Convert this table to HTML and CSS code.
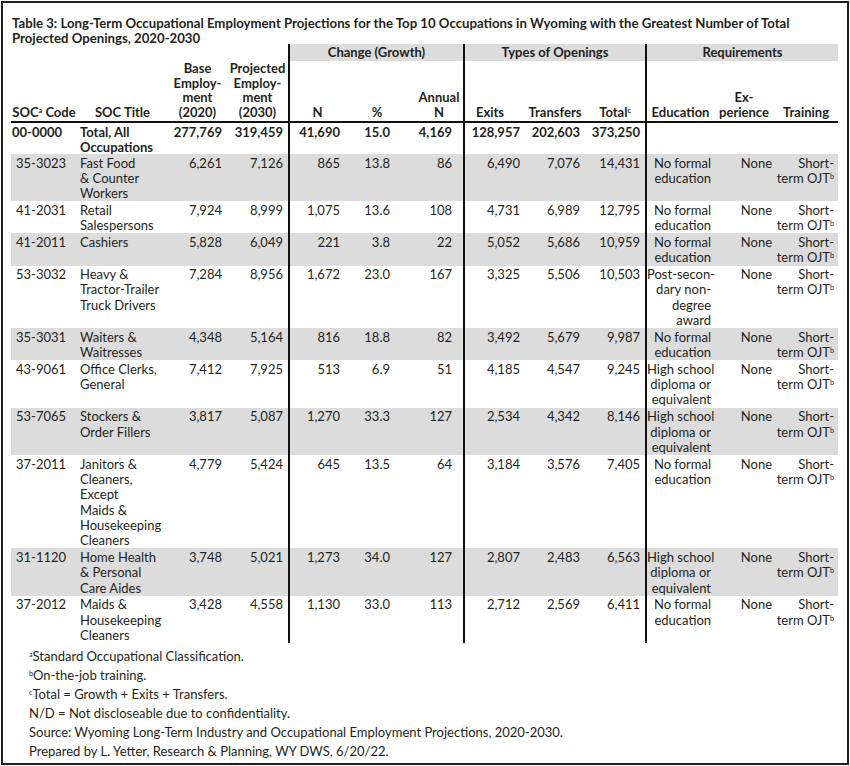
FILE: index.html
```html
<!DOCTYPE html>
<html lang="en">
<head>
<meta charset="utf-8">
<title>Table 3: Long-Term Occupational Employment Projections</title>
<link rel="stylesheet" href="styles.css">
</head>
<body>
<div class="frame">
  <h1 class="title">Table 3: Long-Term Occupational Employment Projections for the Top 10 Occupations in Wyoming with the Greatest Number of Total<br>Projected Openings, 2020-2030</h1>
  <table class="proj">
    <colgroup>
      <col class="c-code"><col class="c-title"><col class="c-base"><col class="c-proj">
      <col class="c-n"><col class="c-pct"><col class="c-ann">
      <col class="c-exit"><col class="c-trans"><col class="c-tot">
      <col class="c-edu"><col class="c-exp"><col class="c-train">
    </colgroup>
    <thead>
      <tr class="group">
        <th colspan="4" class="blank"></th>
        <th colspan="3" class="grp vl">Change (Growth)</th>
        <th colspan="3" class="grp vl">Types of Openings</th>
        <th colspan="3" class="grp vl">Requirements</th>
      </tr>
      <tr class="heads">
        <th>SOC<sup>a</sup> Code</th>
        <th>SOC Title</th>
        <th>Base<br>Employ-<br>ment<br>(2020)</th>
        <th>Projected<br>Employ-<br>ment<br>(2030)</th>
        <th class="vl">N</th>
        <th class="h-pct">%</th>
        <th class="h-ann">Annual<br>N</th>
        <th class="vl h-exit">Exits</th>
        <th>Transfers</th>
        <th>Total<sup>c</sup></th>
        <th class="vl">Education</th>
        <th>Ex-<br>perience</th>
        <th>Training</th>
      </tr>
    </thead>
    <tbody>
      <tr class="total">
        <td class="code">00-0000</td>
        <td class="name">Total, All<br>Occupations</td>
        <td class="num">277,769</td>
        <td class="num">319,459</td>
        <td class="num vl">41,690</td>
        <td class="num">15.0</td>
        <td class="num ann">4,169</td>
        <td class="num vl">128,957</td>
        <td class="num">202,603</td>
        <td class="num">373,250</td>
        <td class="vl"></td>
        <td></td>
        <td></td>
      </tr>
      <tr class="shade">
        <td class="code">35-3023</td>
        <td class="name">Fast Food<br>&amp; Counter<br>Workers</td>
        <td class="num">6,261</td><td class="num">7,126</td>
        <td class="num vl">865</td><td class="num">13.8</td><td class="num ann">86</td>
        <td class="num vl">6,490</td><td class="num">7,076</td><td class="num">14,431</td>
        <td class="edu vl">No formal<br>education</td><td class="exp">None</td><td class="train">Short-<br>term OJT<sup>b</sup></td>
      </tr>
      <tr>
        <td class="code">41-2031</td>
        <td class="name">Retail<br>Salespersons</td>
        <td class="num">7,924</td><td class="num">8,999</td>
        <td class="num vl">1,075</td><td class="num">13.6</td><td class="num ann">108</td>
        <td class="num vl">4,731</td><td class="num">6,989</td><td class="num">12,795</td>
        <td class="edu vl">No formal<br>education</td><td class="exp">None</td><td class="train">Short-<br>term OJT<sup>b</sup></td>
      </tr>
      <tr class="shade">
        <td class="code">41-2011</td>
        <td class="name">Cashiers</td>
        <td class="num">5,828</td><td class="num">6,049</td>
        <td class="num vl">221</td><td class="num">3.8</td><td class="num ann">22</td>
        <td class="num vl">5,052</td><td class="num">5,686</td><td class="num">10,959</td>
        <td class="edu vl">No formal<br>education</td><td class="exp">None</td><td class="train">Short-<br>term OJT<sup>b</sup></td>
      </tr>
      <tr>
        <td class="code">53-3032</td>
        <td class="name">Heavy &amp;<br>Tractor-Trailer<br>Truck Drivers</td>
        <td class="num">7,284</td><td class="num">8,956</td>
        <td class="num vl">1,672</td><td class="num">23.0</td><td class="num ann">167</td>
        <td class="num vl">3,325</td><td class="num">5,506</td><td class="num">10,503</td>
        <td class="edu vl">Post-secon-<br>dary non-<br>degree<br>award</td><td class="exp">None</td><td class="train">Short-<br>term OJT<sup>b</sup></td>
      </tr>
      <tr class="shade">
        <td class="code">35-3031</td>
        <td class="name">Waiters &amp;<br>Waitresses</td>
        <td class="num">4,348</td><td class="num">5,164</td>
        <td class="num vl">816</td><td class="num">18.8</td><td class="num ann">82</td>
        <td class="num vl">3,492</td><td class="num">5,679</td><td class="num">9,987</td>
        <td class="edu vl">No formal<br>education</td><td class="exp">None</td><td class="train">Short-<br>term OJT<sup>b</sup></td>
      </tr>
      <tr>
        <td class="code">43-9061</td>
        <td class="name">Office Clerks,<br>General</td>
        <td class="num">7,412</td><td class="num">7,925</td>
        <td class="num vl">513</td><td class="num">6.9</td><td class="num ann">51</td>
        <td class="num vl">4,185</td><td class="num">4,547</td><td class="num">9,245</td>
        <td class="edu vl">High school<br>diploma or<br>equivalent</td><td class="exp">None</td><td class="train">Short-<br>term OJT<sup>b</sup></td>
      </tr>
      <tr class="shade">
        <td class="code">53-7065</td>
        <td class="name">Stockers &amp;<br>Order Fillers</td>
        <td class="num">3,817</td><td class="num">5,087</td>
        <td class="num vl">1,270</td><td class="num">33.3</td><td class="num ann">127</td>
        <td class="num vl">2,534</td><td class="num">4,342</td><td class="num">8,146</td>
        <td class="edu vl">High school<br>diploma or<br>equivalent</td><td class="exp">None</td><td class="train">Short-<br>term OJT<sup>b</sup></td>
      </tr>
      <tr>
        <td class="code">37-2011</td>
        <td class="name">Janitors &amp;<br>Cleaners,<br>Except<br>Maids &amp;<br>Housekeeping<br>Cleaners</td>
        <td class="num">4,779</td><td class="num">5,424</td>
        <td class="num vl">645</td><td class="num">13.5</td><td class="num ann">64</td>
        <td class="num vl">3,184</td><td class="num">3,576</td><td class="num">7,405</td>
        <td class="edu vl">No formal<br>education</td><td class="exp">None</td><td class="train">Short-<br>term OJT<sup>b</sup></td>
      </tr>
      <tr class="shade">
        <td class="code">31-1120</td>
        <td class="name">Home Health<br>&amp; Personal<br>Care Aides</td>
        <td class="num">3,748</td><td class="num">5,021</td>
        <td class="num vl">1,273</td><td class="num">34.0</td><td class="num ann">127</td>
        <td class="num vl">2,807</td><td class="num">2,483</td><td class="num">6,563</td>
        <td class="edu vl">High school<br>diploma or<br>equivalent</td><td class="exp">None</td><td class="train">Short-<br>term OJT<sup>b</sup></td>
      </tr>
      <tr>
        <td class="code">37-2012</td>
        <td class="name">Maids &amp;<br>Housekeeping<br>Cleaners</td>
        <td class="num">3,428</td><td class="num">4,558</td>
        <td class="num vl">1,130</td><td class="num">33.0</td><td class="num ann">113</td>
        <td class="num vl">2,712</td><td class="num">2,569</td><td class="num">6,411</td>
        <td class="edu vl">No formal<br>education</td><td class="exp">None</td><td class="train">Short-<br>term OJT<sup>b</sup></td>
      </tr>
    </tbody>
  </table>
  <div class="notes">
    <p><sup>a</sup>Standard Occupational Classification.</p>
    <p><sup>b</sup>On-the-job training.</p>
    <p><sup>c</sup>Total = Growth + Exits + Transfers.</p>
    <p>N/D = Not discloseable due to confidentiality.</p>
    <p>Source: Wyoming Long-Term Industry and Occupational Employment Projections, 2020-2030.</p>
    <p>Prepared by L. Yetter, Research &amp; Planning, WY DWS, 6/20/22.</p>
  </div>
</div>
</body>
</html>
```

FILE: styles.css
```css
html, body {
  margin: 0;
  padding: 0;
  background: #ffffff;
}

body {
  font-family: Lato, "Open Sans", "Liberation Sans", sans-serif;
  color: #231f20;
}

.frame {
  box-sizing: border-box;
  width: 848px;
  height: 764px;
  margin: 1px;
  border: 2px solid #231f20;
  padding: 13px 9px 0 8px;
}

.title {
  margin: 0 0 -2px;
  padding-left: 1px;
  font-size: 13.2px;
  font-weight: 700;
  line-height: 15px;
  white-space: nowrap;
}

.proj {
  width: 827px;
  table-layout: fixed;
  border-collapse: collapse;
  font-size: 13px;
}

.c-code { width: 66px; }
.c-title { width: 91px; }
.c-base { width: 59px; }
.c-proj { width: 62px; }
.c-n { width: 56px; }
.c-pct { width: 50px; }
.c-ann { width: 69px; }
.c-exit { width: 61px; }
.c-trans { width: 60px; }
.c-tot { width: 61px; }
.c-edu { width: 68px; }
.c-exp { width: 60px; }
.c-train { width: 64px; }

.proj th,
.proj td {
  padding: 0;
  vertical-align: top;
  white-space: nowrap;
}

.proj .vl {
  border-left: 2px solid #111;
}

.proj .group th {
  height: 17px;
  padding: 1px 0 0;
  line-height: 15px;
  font-weight: 700;
  text-align: center;
  box-sizing: border-box;
}

.proj .group .grp {
  background: #dcdcdd;
}

.proj .heads th {
  vertical-align: bottom;
  font-weight: 700;
  line-height: 14.5px;
  text-align: center;
  padding: 0 0 2px;
  border-bottom: 2px solid #111;
}

.proj .heads .h-pct { padding-left: 14px; }
.proj .heads .h-ann { padding-left: 20px; }
.proj .heads .h-exit { padding-right: 10px; }

sup {
  font-size: 0.55em;
  line-height: 0;
  vertical-align: 0.6em;
}

.proj tbody td {
  line-height: 15.3px;
  padding-top: 1.5px;
}

.proj tbody tr.total td {
  font-weight: 700;
  line-height: 14.5px;
  padding-top: 2px;
}

.proj tbody tr.shade td {
  background: #dcdcdd;
}

.proj td.code { padding-left: 5px; }
.proj tr.total td.code { padding-left: 1px; }

.proj td.name { padding-left: 3px; }

.proj td.num {
  text-align: right;
  padding-right: 5px;
}

.proj td.num.ann { padding-right: 11px; }

.proj td.edu {
  text-align: right;
  padding-right: 3px;
}

.proj td.exp {
  text-align: right;
  padding-right: 2px;
}

.proj td.train {
  text-align: right;
  padding-right: 4px;
}

.notes {
  margin-top: 4px;
  padding-left: 18px;
  font-size: 13px;
}

.notes p {
  margin: 0;
  line-height: 19px;
}
```
